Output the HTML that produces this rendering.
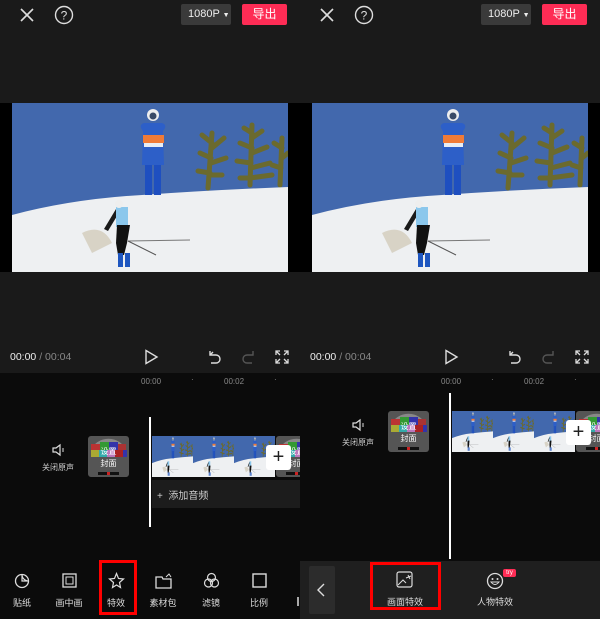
<!DOCTYPE html>
<html><head><meta charset="utf-8"><style>
*{margin:0;padding:0;box-sizing:border-box}
body{width:600px;height:619px;background:#0b0b0b;font-family:"Liberation Sans","Noto Sans CJK SC",sans-serif;position:relative;overflow:hidden;color:#ddd}
.a{position:absolute}
.panel{position:absolute;top:0;width:300px;height:619px;background:#0b0b0b;overflow:hidden}
.top{position:absolute;left:0;top:0;width:300px;height:373px;background:#1a1a1a}
.vid{position:absolute;left:0;top:103px;width:300px;height:169px;background:#000}
.btn1080{position:absolute;left:181px;top:4px;width:50px;height:21px;background:#3a3a3a;border-radius:2px;font-size:11px;color:#eee;line-height:21px;padding-left:7px}
.exp{position:absolute;left:242px;top:4px;width:45px;height:21px;background:#fe2c55;border-radius:2px;font-size:12px;color:#fff;line-height:21px;text-align:center}
.tm{position:absolute;left:10px;top:351px;font-size:10.5px;color:#eee}
.tm span{color:#888}
.rul{position:absolute;font-size:8px;color:#888}
.lbl{position:absolute;font-size:9px;color:#ccc;text-align:center;width:50px}
.tb{position:absolute;top:596px;font-size:9px;color:#ddd;width:50px;text-align:center}
</style></head><body>
<svg width="0" height="0" style="position:absolute"><defs>
<symbol id="img" viewBox="0 0 276 169" preserveAspectRatio="none">
<rect width="276" height="169" fill="#4268ad"/>
<g stroke="#6b6a2e" stroke-width="5" stroke-linecap="round" fill="none">
<path d="M196 85 L200 30 M200 40 L190 32 M200 45 L212 35 M199 55 L188 50 M199 60 L214 55 M198 70 L186 68 M198 72 L210 72"/>
<path d="M238 82 L240 22 M240 30 L232 25 M240 35 L250 28 M240 45 L228 40 M240 50 L255 44 M239 60 L225 58 M239 65 L258 60 M238 75 L228 75 M238 75 L260 72"/>
<path d="M268 82 L270 35 M270 45 L262 40 M270 55 L276 50 M269 65 L260 62"/>
</g>
<path d="M0 112 Q60 96 130 92 Q200 87 276 84 L276 169 L0 169Z" fill="#eef0f2"/>
<path d="M70 130 Q90 120 100 140 L80 150Z" fill="#c9bfa8" opacity="0.6"/>
<path d="M131 28 Q126 22 132 20 L150 20 Q156 22 151 28 L152 62 L130 62Z" fill="#2d5fc8"/>
<rect x="131" y="32" width="21" height="8" fill="#f07b37"/>
<rect x="132" y="40" width="19" height="4" fill="#e8eef5"/>
<rect x="133" y="62" width="7" height="30" fill="#1e4fc0"/><rect x="142" y="62" width="7" height="30" fill="#1e4fc0"/>
<circle cx="141" cy="12" r="6" fill="#eee"/><circle cx="141" cy="13" r="3.5" fill="#3a4a66"/>
<path d="M92 126 L104 106 L108 108 L96 128Z" fill="#1a1a1a"/>
<rect x="104" y="104" width="12" height="20" fill="#8bc7ec"/>
<circle cx="107" cy="101" r="4" fill="#eee"/>
<path d="M105 122 L118 122 L115 140 L112 152 L106 152 L104 140Z" fill="#111"/>
<rect x="106" y="150" width="5" height="14" fill="#1e56c0"/><rect x="113" y="150" width="5" height="14" fill="#1e56c0"/>
<line x1="116" y1="138" x2="178" y2="137" stroke="#777" stroke-width="1"/>
<line x1="116" y1="138" x2="144" y2="152" stroke="#555" stroke-width="1"/>
</symbol>
<symbol id="cov" viewBox="0 0 41 41">
<rect width="41" height="41" fill="#555" rx="3"/>
<path d="M3 15 A18 16 0 0 1 38 15Z" fill="#888"/>
<rect x="3" y="8" width="9" height="6" fill="#b33"/><rect x="12" y="6" width="9" height="8" fill="#393"/><rect x="21" y="6" width="9" height="8" fill="#33a"/><rect x="30" y="8" width="8" height="6" fill="#a33"/>
<rect x="3" y="14" width="8" height="7" fill="#aa3"/><rect x="11" y="14" width="8" height="7" fill="#3aa"/><rect x="19" y="14" width="8" height="7" fill="#b7b"/><rect x="27" y="14" width="8" height="7" fill="#a22"/><rect x="35" y="14" width="4" height="7" fill="#33a"/>
<rect x="10" y="36" width="21" height="3" fill="#111"/><rect x="19" y="36" width="3" height="3" fill="#c22"/>
<text x="20.5" y="18" font-size="8" fill="#fff" text-anchor="middle" font-family="Noto Sans CJK SC">设置</text>
<text x="20.5" y="30" font-size="8" fill="#fff" text-anchor="middle" font-family="Noto Sans CJK SC">封面</text>
</symbol>
</defs></svg>

<!-- LEFT PANEL -->
<div class="panel" style="left:0">
<div class="top"></div>
<svg class="a" style="left:19px;top:7px" width="16" height="16"><path d="M2 2L14 14M14 2L2 14" stroke="#ddd" stroke-width="1.6"/></svg>
<svg class="a" style="left:54px;top:5px" width="20" height="20"><circle cx="10" cy="10" r="8.5" fill="none" stroke="#ddd" stroke-width="1.4"/><text x="10" y="14.5" font-size="12" fill="#ddd" text-anchor="middle" font-family="Liberation Sans">?</text></svg>
<div class="btn1080">1080P <span style="font-size:7px">▼</span></div>
<div class="exp">导出</div>
<div class="vid"><svg class="a" style="left:12px;top:0" width="276" height="169"><use href="#img"/></svg></div>
<div class="tm">00:00 <span>/ 00:04</span></div>
<svg class="a" style="left:143px;top:349px" width="16" height="16"><path d="M3 1.5L14 8L3 14.5Z" fill="none" stroke="#ddd" stroke-width="1.4"/></svg>
<svg class="a" style="left:207px;top:349px" width="16" height="16"><path d="M3 2V6H9A4 4 0 0 1 9 14H4" fill="none" stroke="#ddd" stroke-width="1.4"/><path d="M3 6L6 3" stroke="#ddd" stroke-width="1.4"/></svg>
<svg class="a" style="left:240px;top:349px" width="16" height="16"><path d="M13 2V6H7A4 4 0 0 0 7 14H12" fill="none" stroke="#555" stroke-width="1.4"/></svg>
<svg class="a" style="left:275px;top:350px" width="14" height="14"><path d="M1 5V1H5M9 1H13V5M13 9V13H9M5 13H1V9M1 1L5 5M13 1L9 5M13 13L9 9M1 13L5 9" fill="none" stroke="#ddd" stroke-width="1.3"/></svg>
<div class="rul" style="left:141px;top:377px">00:00</div><div class="rul" style="left:191px;top:375px">·</div>
<div class="rul" style="left:224px;top:377px">00:02</div><div class="rul" style="left:274px;top:375px">·</div>
<svg class="a" style="left:51px;top:443px" width="14" height="14"><path d="M2 5H5L9 2V12L5 9H2Z" fill="none" stroke="#ddd" stroke-width="1.2"/><path d="M12 5V9" stroke="#ddd"/></svg>
<div class="lbl" style="left:33px;top:462px;font-size:8px">关闭原声</div>
<svg class="a" style="left:88px;top:436px" width="41" height="41"><use href="#cov"/></svg>
<svg class="a" style="left:152px;top:436px" width="41" height="41"><use href="#img"/></svg>
<svg class="a" style="left:193px;top:436px" width="41" height="41"><use href="#img"/></svg>
<svg class="a" style="left:234px;top:436px" width="41" height="41"><use href="#img"/></svg>
<svg class="a" style="left:276px;top:436px" width="41" height="41"><use href="#cov"/></svg>
<div class="a" style="left:266px;top:445px;width:25px;height:25px;background:#fff;border-radius:3px;color:#222;font-size:20px;line-height:24px;text-align:center">+</div>
<div class="a" style="left:152px;top:480px;width:148px;height:28px;background:#1c1c1c"></div>
<div class="a" style="left:157px;top:487px;font-size:10px;color:#ccc">+ &nbsp;添加音频</div>
<div class="a" style="left:149px;top:417px;width:2px;height:110px;background:#fff"></div>
<svg class="a" style="left:14px;top:573px" width="16" height="16"><circle cx="8" cy="8" r="6.5" fill="none" stroke="#ddd" stroke-width="1.3"/><path d="M8 1.5A6.5 6.5 0 0 0 14.5 8L8 8Z" fill="none" stroke="#ddd" stroke-width="1.2"/></svg>
<svg class="a" style="left:62px;top:573px" width="15" height="15"><rect x="1" y="1" width="13" height="13" fill="none" stroke="#ddd" stroke-width="1.3"/><rect x="4" y="4" width="7" height="7" fill="none" stroke="#ddd"/></svg>
<svg class="a" style="left:108px;top:572px" width="17" height="17"><path d="M8.5 1.5L10.5 6.5L15.5 7L11.5 10.5L12.5 15.5L8.5 13L4.5 15.5L5.5 10.5L1.5 7L6.5 6.5Z" fill="none" stroke="#ddd" stroke-width="1.2"/></svg>
<svg class="a" style="left:155px;top:572px" width="18" height="17"><path d="M1 5H7L8 7H16V16H1Z" fill="none" stroke="#ddd" stroke-width="1.3"/><path d="M11 5L14 2L16 5" fill="none" stroke="#ddd"/></svg>
<svg class="a" style="left:203px;top:572px" width="17" height="17"><circle cx="8.5" cy="5.5" r="4" fill="none" stroke="#ddd" stroke-width="1.2"/><circle cx="5.5" cy="11" r="4" fill="none" stroke="#ddd" stroke-width="1.2"/><circle cx="11.5" cy="11" r="4" fill="none" stroke="#ddd" stroke-width="1.2"/></svg>
<svg class="a" style="left:252px;top:573px" width="15" height="15"><rect x="1" y="1" width="13" height="13" fill="none" stroke="#ddd" stroke-width="1.4"/></svg>
<div class="tb" style="left:-3px">贴纸</div><div class="tb" style="left:44px">画中画</div><div class="tb" style="left:91px">特效</div><div class="tb" style="left:138px">素材包</div><div class="tb" style="left:186px">滤镜</div><div class="tb" style="left:234px">比例</div>
<div class="a" style="left:297px;top:597px;width:2px;height:9px;background:#aaa"></div>
<div class="a" style="left:99px;top:560px;width:38px;height:55px;border:3px solid #f00"></div>
</div>

<!-- RIGHT PANEL -->
<div class="panel" style="left:300px">
<div class="top"></div>
<svg class="a" style="left:19px;top:7px" width="16" height="16"><path d="M2 2L14 14M14 2L2 14" stroke="#ddd" stroke-width="1.6"/></svg>
<svg class="a" style="left:54px;top:5px" width="20" height="20"><circle cx="10" cy="10" r="8.5" fill="none" stroke="#ddd" stroke-width="1.4"/><text x="10" y="14.5" font-size="12" fill="#ddd" text-anchor="middle" font-family="Liberation Sans">?</text></svg>
<div class="btn1080">1080P <span style="font-size:7px">▼</span></div>
<div class="exp">导出</div>
<div class="vid"><svg class="a" style="left:12px;top:0" width="276" height="169"><use href="#img"/></svg></div>
<div class="tm">00:00 <span>/ 00:04</span></div>
<svg class="a" style="left:143px;top:349px" width="16" height="16"><path d="M3 1.5L14 8L3 14.5Z" fill="none" stroke="#ddd" stroke-width="1.4"/></svg>
<svg class="a" style="left:207px;top:349px" width="16" height="16"><path d="M3 2V6H9A4 4 0 0 1 9 14H4" fill="none" stroke="#ddd" stroke-width="1.4"/><path d="M3 6L6 3" stroke="#ddd" stroke-width="1.4"/></svg>
<svg class="a" style="left:240px;top:349px" width="16" height="16"><path d="M13 2V6H7A4 4 0 0 0 7 14H12" fill="none" stroke="#555" stroke-width="1.4"/></svg>
<svg class="a" style="left:275px;top:350px" width="14" height="14"><path d="M1 5V1H5M9 1H13V5M13 9V13H9M5 13H1V9M1 1L5 5M13 1L9 5M13 13L9 9M1 13L5 9" fill="none" stroke="#ddd" stroke-width="1.3"/></svg>
<div class="rul" style="left:141px;top:377px">00:00</div><div class="rul" style="left:191px;top:375px">·</div>
<div class="rul" style="left:224px;top:377px">00:02</div><div class="rul" style="left:274px;top:375px">·</div>
<svg class="a" style="left:51px;top:418px" width="14" height="14"><path d="M2 5H5L9 2V12L5 9H2Z" fill="none" stroke="#ddd" stroke-width="1.2"/><path d="M12 5V9" stroke="#ddd"/></svg>
<div class="lbl" style="left:33px;top:437px;font-size:8px">关闭原声</div>
<svg class="a" style="left:88px;top:411px" width="41" height="41"><use href="#cov"/></svg>
<svg class="a" style="left:152px;top:411px" width="41" height="41"><use href="#img"/></svg>
<svg class="a" style="left:193px;top:411px" width="41" height="41"><use href="#img"/></svg>
<svg class="a" style="left:234px;top:411px" width="41" height="41"><use href="#img"/></svg>
<svg class="a" style="left:276px;top:411px" width="41" height="41"><use href="#cov"/></svg>
<div class="a" style="left:266px;top:420px;width:25px;height:25px;background:#fff;border-radius:3px;color:#222;font-size:20px;line-height:24px;text-align:center">+</div>
<div class="a" style="left:149px;top:393px;width:2px;height:166px;background:#fff"></div>
<div class="a" style="left:0;top:561px;width:300px;height:58px;background:#1f1f1f"></div>
<div class="a" style="left:9px;top:566px;width:26px;height:48px;background:#2c2c2c;border-radius:2px"></div>
<svg class="a" style="left:16px;top:582px" width="10" height="16"><path d="M8 2L2 8L8 14" fill="none" stroke="#ddd" stroke-width="1.4"/></svg>
<svg class="a" style="left:96px;top:571px" width="18" height="17"><rect x="1" y="1" width="15" height="15" rx="2" fill="none" stroke="#ddd" stroke-width="1.2"/><path d="M2 14L7 9L10 12" fill="none" stroke="#ddd"/><path d="M12 4L14 8M10 7L15 5" stroke="#ddd"/></svg>
<div class="tb" style="left:80px;top:595px">画面特效</div>
<svg class="a" style="left:186px;top:572px" width="18" height="18"><circle cx="9" cy="9" r="7.5" fill="none" stroke="#ddd" stroke-width="1.3"/><path d="M5 10Q9 15 13 10Z" fill="none" stroke="#ddd"/><circle cx="6.5" cy="7" r="1" fill="#ddd"/><circle cx="11.5" cy="7" r="1" fill="#ddd"/></svg>
<div class="a" style="left:203px;top:569px;width:13px;height:8px;background:#fe2c55;border-radius:2px;font-size:6px;color:#fff;text-align:center;line-height:8px">try</div>
<div class="tb" style="left:170px;top:595px">人物特效</div>
<div class="a" style="left:70px;top:562px;width:71px;height:48px;border:3px solid #f00"></div>
</div>
</body></html>
